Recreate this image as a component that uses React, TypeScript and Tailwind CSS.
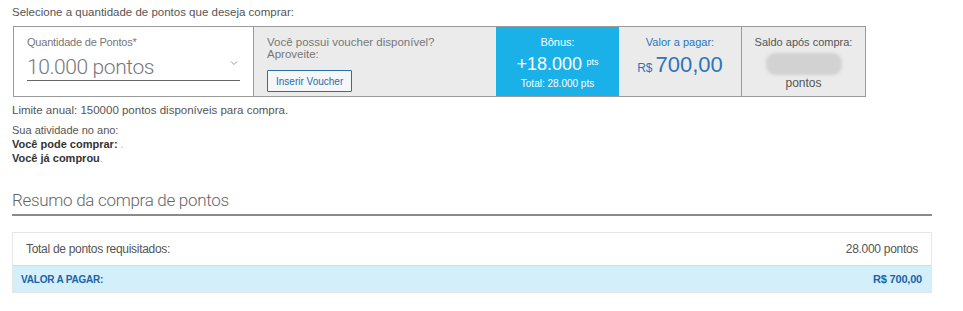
import React from "react";

export default function App() {
  return (
    <div className="w-[963px] h-[311px] bg-white overflow-hidden text-[#555]" style={{ fontFamily: '"Liberation Sans", Arial, sans-serif' }}>
      <div className="pl-[12px] pr-[31px]">
        <div className="pt-[6px] text-[11.5px] leading-[13px] text-[#555]">Selecione a quantidade de pontos que deseja comprar:</div>
        <div className="mt-[7px] ml-[1px] w-[853px] h-[71px] border border-[#9a9a9a] flex">
          <div className="w-[240px] bg-white border-r border-[#9a9a9a] pl-[13px] pr-[13px] pt-[9px]">
            <div className="text-[11px] leading-[13px] text-[#777] tracking-[-0.2px]">Quantidade de Pontos*</div>
            <div className="mt-[3px] flex items-end justify-between border-b border-[#666] h-[29px]">
              <span className="text-[21px] leading-[26px] text-[#777] tracking-[-0.4px]" style={{ fontFamily: 'Roboto, "Liberation Sans", sans-serif', fontWeight: 300 }}>10.000 pontos</span>
              <svg width="8" height="6" viewBox="0 0 8 6" className="mb-[14px] mr-[2px]"><path d="M1 1.5 L4 4.5 L7 1.5" fill="none" stroke="#999" strokeWidth="1" /></svg>
            </div>
          </div>
          <div className="w-[242px] bg-[#ebebeb] pl-[13px] pt-[9px]">
            <div className="text-[11.5px] leading-[12px] text-[#777]">Você possui voucher disponível?<br />Aproveite:</div>
            <button className="mt-[10px] h-[22px] px-[8px] border border-[#2a6db0] bg-[#f4f6f8] text-[10px] text-[#2a6db0] rounded-[1px]">Inserir Voucher</button>
          </div>
          <div className="w-[123px] bg-[#1ab0e8] text-white flex flex-col items-center pt-[9px]">
            <div className="text-[11px] leading-[13px]">Bônus:</div>
            <div className="mt-[2px] leading-[22px]"><span className="text-[18px]">+18.000</span> <span className="text-[9px] align-[5px]">pts</span></div>
            <div className="text-[10px] leading-[12px] mt-[2px]">Total: 28.000 pts</div>
          </div>
          <div className="w-[123px] bg-[#ebebeb] border-r border-[#9a9a9a] flex flex-col items-center pt-[9px]">
            <div className="text-[11px] leading-[13px] text-[#2a76bb]">Valor a pagar:</div>
            <div className="mt-[3px] text-[#2a76bb] leading-[26px]"><span className="text-[12px]">R$</span><span className="text-[22px] ml-[3px]">700,00</span></div>
          </div>
          <div className="flex-1 bg-[#ebebeb] flex flex-col items-center pt-[9px]">
            <div className="text-[11px] leading-[13px] text-[#555]">Saldo após compra:</div>
            <div className="mt-[4px] w-[76px] h-[22px] rounded-[9px] bg-[#d2d2d2] blur-[1.5px]"></div>
            <div className="text-[12px] leading-[14px] text-[#555] mt-[1px]">pontos</div>
          </div>
        </div>
        <div className="mt-[7px] text-[11.5px] leading-[13px] text-[#555]">Limite anual: 150000 pontos disponíveis para compra.</div>
        <div className="mt-[6px] text-[11px] leading-[14px] text-[#555]">
          <div>Sua atividade no ano:</div>
          <div><b className="text-[#333]">Você pode comprar:</b> <span className="text-[#bbb]">.</span></div>
          <div><b className="text-[#333]">Você já comprou</b><span className="text-[#bbb]">.</span></div>
        </div>
        <div className="mt-[25px] text-[17px] leading-[20px] text-[#666] tracking-[-0.3px]" style={{ fontFamily: 'Roboto, "Liberation Sans", sans-serif', fontWeight: 300 }}>Resumo da compra de pontos</div>
        <div className="mt-[4px] h-[2px] bg-[#8a8a8a] w-[920px]"></div>
        <div className="mt-[16px] w-[920px] border border-[#e6e6e6]">
          <div className="h-[33px] flex items-center justify-between pl-[13px] pr-[13px] bg-white border-b border-[#d0dde5] text-[12px] text-[#555] tracking-[-0.3px]">
            <span>Total de pontos requisitados:</span>
            <span>28.000 pontos</span>
          </div>
          <div className="h-[26px] flex items-center justify-between pl-[8px] pr-[9px] bg-[#d3effa] text-[10px] font-bold text-[#1d63a8] tracking-[-0.2px]">
            <span>VALOR A PAGAR:</span>
            <span className="text-[11px]">R$ 700,00</span>
          </div>
        </div>
      </div>
    </div>
  );
}
